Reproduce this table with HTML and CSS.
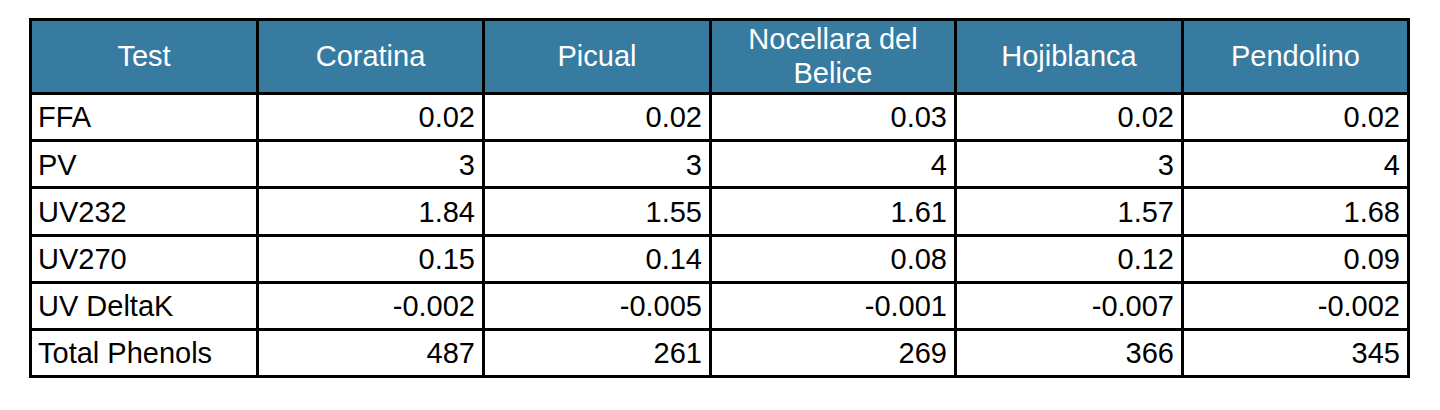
FILE: index.html
```html
<!DOCTYPE html>
<html lang="en">
<head>
<meta charset="utf-8">
<title>Olive oil test results</title>
<link rel="stylesheet" href="styles.css">
</head>
<body>
<table class="results">
  <colgroup>
    <col class="c-std">
    <col class="c-std2">
    <col class="c-std">
    <col class="c-wide">
    <col class="c-std">
    <col class="c-std2">
  </colgroup>
  <thead>
    <tr>
      <th>Test</th>
      <th>Coratina</th>
      <th>Picual</th>
      <th>Nocellara del Belice</th>
      <th>Hojiblanca</th>
      <th>Pendolino</th>
    </tr>
  </thead>
  <tbody>
    <tr><td>FFA</td><td>0.02</td><td>0.02</td><td>0.03</td><td>0.02</td><td>0.02</td></tr>
    <tr><td>PV</td><td>3</td><td>3</td><td>4</td><td>3</td><td>4</td></tr>
    <tr><td>UV232</td><td>1.84</td><td>1.55</td><td>1.61</td><td>1.57</td><td>1.68</td></tr>
    <tr><td>UV270</td><td>0.15</td><td>0.14</td><td>0.08</td><td>0.12</td><td>0.09</td></tr>
    <tr><td>UV DeltaK</td><td>-0.002</td><td>-0.005</td><td>-0.001</td><td>-0.007</td><td>-0.002</td></tr>
    <tr><td>Total Phenols</td><td>487</td><td>261</td><td>269</td><td>366</td><td>345</td></tr>
  </tbody>
</table>
</body>
</html>
```

FILE: styles.css
```css
html, body {
  margin: 0;
  padding: 0;
  background: #ffffff;
}

body {
  padding: 18px 0 0 29px;
  font-family: "Liberation Sans", Arial, sans-serif;
  font-size: 29px;
  color: #000000;
}

.results {
  border-collapse: collapse;
  table-layout: fixed;
  width: 1381px;
  border: 3px solid #000;
}

.c-std { width: 227px; }
.c-std2 { width: 226px; }
.c-wide { width: 245px; }

.results th,
.results td {
  border: 3px solid #000;
  line-height: 1.15;
  overflow: hidden;
}

.results th {
  background: #377ba0;
  color: #ffffff;
  font-weight: normal;
  text-align: center;
  height: 71px;
  padding: 0 6px;
}

.results td {
  height: 42.2px;
  padding: 2px 7px 0 6px;
  text-align: right;
}

.results td:first-child {
  text-align: left;
}
```
